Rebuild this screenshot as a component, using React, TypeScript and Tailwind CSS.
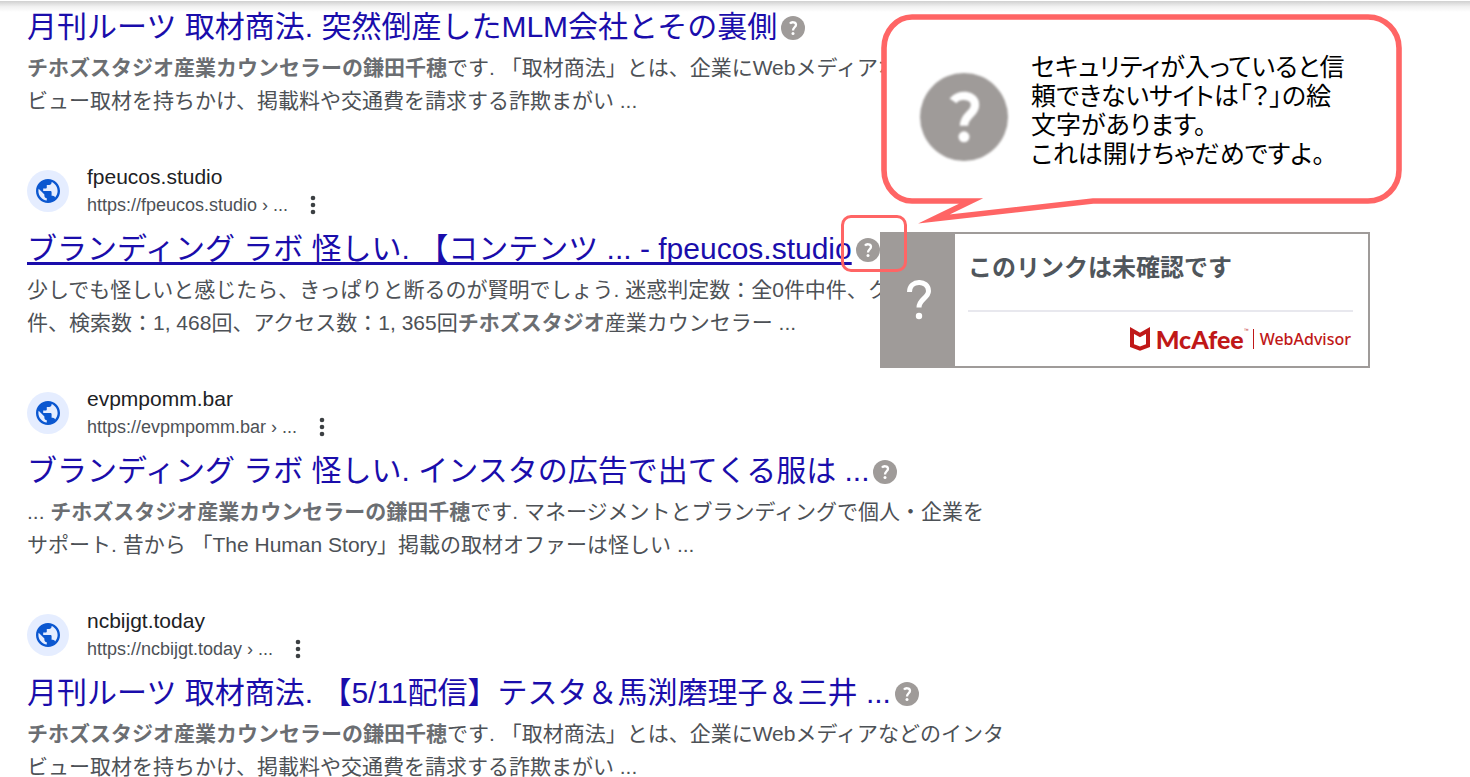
import type { ReactNode } from "react";

type Result = {
  site?: string;
  url?: string;
  title: string;
  underlined?: boolean;
  lines: ReactNode[];
};

const results: Result[] = [
  {
    title: "月刊ルーツ 取材商法. 突然倒産したMLM会社とその裏側",
    lines: [
      <><b>チホズスタジオ産業カウンセラーの鎌田千穂</b>です. 「取材商法」とは、企業にWebメディアなどのインタ</>,
      <>ビュー取材を持ちかけ、掲載料や交通費を請求する詐欺まがい ...</>,
    ],
  },
  {
    site: "fpeucos.studio",
    url: "https://fpeucos.studio",
    title: "ブランディング ラボ 怪しい. 【コンテンツ ... - fpeucos.studio",
    underlined: true,
    lines: [
      <>少しでも怪しいと感じたら、きっぱりと断るのが賢明でしょう. 迷惑判定数：全0件中件、ク</>,
      <>件、検索数：1, 468回、アクセス数：1, 365回<b>チホズスタジオ</b>産業カウンセラー ...</>,
    ],
  },
  {
    site: "evpmpomm.bar",
    url: "https://evpmpomm.bar",
    title: "ブランディング ラボ 怪しい. インスタの広告で出てくる服は ...",
    lines: [
      <>... <b>チホズスタジオ産業カウンセラーの鎌田千穂</b>です. マネージメントとブランディングで個人・企業を</>,
      <>サポート. 昔から 「The Human Story」掲載の取材オファーは怪しい ...</>,
    ],
  },
  {
    site: "ncbijgt.today",
    url: "https://ncbijgt.today",
    title: "月刊ルーツ 取材商法. 【5/11配信】テスタ＆馬渕磨理子＆三井 ...",
    lines: [
      <><b>チホズスタジオ産業カウンセラーの鎌田千穂</b>です. 「取材商法」とは、企業にWebメディアなどのインタ</>,
      <>ビュー取材を持ちかけ、掲載料や交通費を請求する詐欺まがい ...</>,
    ],
  },
];

function Question({ className }: { className: string }) {
  return (
    <svg viewBox="0 0 24 24" className={className} aria-hidden="true">
      <circle cx="12" cy="12" r="12" fill="#9f9b99" />
      <path d="M9 7.6C10.4 5.6 15 5.7 15 8.7C15 11.2 12 11.4 12 14.4" fill="none" stroke="#fff" strokeWidth="2.3" />
      <circle cx="12" cy="17.4" r="1.5" fill="#fff" />
    </svg>
  );
}

function Globe() {
  return (
    <span className="flex size-[42px] shrink-0 items-center justify-center rounded-full bg-[#e5edff]">
      <svg viewBox="2 2 20 20" className="size-6" fill="#0b57d0" aria-hidden="true">
        <path d="M12 2C6.48 2 2 6.48 2 12s4.48 10 10 10 10-4.48 10-10S17.52 2 12 2zM4 12c0-.61.08-1.21.21-1.78L8.99 15v1c0 1.1.9 2 2 2v1.93C7.06 19.43 4 16.07 4 12zm13.89 5.4c-.26-.81-1-1.4-1.9-1.4h-1v-3c0-.55-.45-1-1-1h-6v-2h2c.55 0 1-.45 1-1V7h2c1.1 0 2-.9 2-2v-.41C17.92 5.77 20 8.65 20 12c0 2.08-.81 3.98-2.11 5.4z" />
      </svg>
    </span>
  );
}

function ResultItem({ r }: { r: Result }) {
  return (
    <article className="whitespace-nowrap">
      {r.site && (
        <div className="mb-[10px] flex h-14 items-center gap-[18px]">
          <Globe />
          <div>
            <div className="text-[21px] leading-7 text-[#202124]">{r.site}</div>
            <div className="flex items-center text-[18px] leading-7 text-[#4d5156]">
              <span>{r.url} › ...</span>
              <button aria-label="詳細" className="ml-[15px] flex h-7 w-5 items-center justify-center">
                <svg viewBox="0 0 6 20" className="h-5 w-[6px]" fill="#3c4043" aria-hidden="true">
                  <circle cx="3" cy="3" r="2.3" />
                  <circle cx="3" cy="10" r="2.3" />
                  <circle cx="3" cy="17" r="2.3" />
                </svg>
              </button>
            </div>
          </div>
        </div>
      )}
      <h3 className="flex items-center gap-1 text-[30px] leading-10 text-[#1a0dab]">
        <a href="#" className={r.underlined ? "underline decoration-[3px] underline-offset-3 [text-decoration-skip-ink:none]" : ""}>{r.title}</a>
        <Question className="mt-[2px] size-6" />
      </h3>
      <p className="mt-1 text-[21px] leading-[33px] text-[#4d5156] [&_b]:text-[#6b6e72]">
        {r.lines.map((line, i) => (
          <span key={i} className="block">{line}</span>
        ))}
      </p>
    </article>
  );
}

function Callout() {
  return (
    <div className="absolute left-[881px] top-[13px]">
      <svg viewBox="0 0 521 214" className="h-[214px] w-[521px]" aria-hidden="true">
        <path
          d="M31 4H487A31 31 0 0 1 518 35V157A31 31 0 0 1 487 188H212L53 206L90 188H31A28 31 0 0 1 3 157V35A28 31 0 0 1 31 4Z"
          fill="#fff"
          stroke="#ff6565"
          strokeWidth="5.6"
          strokeMiterlimit="10"
        />
      </svg>
      <div className="absolute inset-x-0 top-[2px] flex h-[192px] items-center gap-[23px] pl-[39px]">
        <Question className="mt-3 size-[88px] blur-[1px]" />
        <p className="whitespace-nowrap text-[25px] leading-[29px] text-black [font-feature-settings:'palt']">
          セキュリティが入っていると信<br />
          頼できないサイトは「？」の絵<br />
          文字があります。<br />
          これは開けちゃだめですよ。
        </p>
      </div>
    </div>
  );
}

function Advisor() {
  return (
    <aside className="absolute left-[880px] top-[232px] flex h-[136px] w-[490px] border-2 border-[#9f9b99] bg-white">
      <div className="flex w-[73px] shrink-0 items-center justify-center bg-[#9f9b99]">
        <svg viewBox="0 0 24 40" className="h-10 w-6" aria-hidden="true">
          <path d="M2.5 12C2.5 -0.5 21.5 -0.5 21.5 11C21.5 18 12 19 12 27.5" fill="none" stroke="#fff" strokeWidth="5" />
          <circle cx="12" cy="36" r="3.2" fill="#fff" />
        </svg>
      </div>
      <div className="flex flex-1 flex-col pl-[13px] pr-[15px]">
        <p className="border-b-2 border-[#e8e8ee] pb-6 pt-4 text-[24px] leading-9 font-bold text-[#50565c]">このリンクは未確認です</p>
        <div className="flex h-[53px] items-center justify-end pr-[2px] text-[#c01818]">
          <svg viewBox="0 0 20 24" className="mr-[6px] h-6 w-5" fill="none" stroke="currentColor" strokeWidth="4" aria-hidden="true">
            <path d="M2 3.5V18.5L10 21.5L18 18.5V3.5L10 8Z" />
          </svg>
          <span className="font-['Lato','Liberation_Sans',sans-serif] text-[25px] leading-8 font-black">McAfee</span>
          <span className="self-start pt-3 text-[5px] leading-3">™</span>
          <span className="ml-1 mr-[6px] h-5 w-px bg-current" />
          <span className="font-['Noto_Sans',sans-serif] text-[16px] leading-6 font-medium">WebAdvisor</span>
        </div>
      </div>
    </aside>
  );
}

export default function App() {
  return (
    <main className="relative h-screen overflow-hidden bg-white font-['Liberation_Sans','Noto_Sans_CJK_JP',sans-serif]" lang="ja">
      <div className="h-3 border-t border-white bg-linear-to-b from-[#d0d0d0] via-[#f0f0f0] to-white" />
      <div className="-mt-[5px] flex flex-col gap-[46px] pl-[27px]">
        {results.map((r, i) => (
          <ResultItem key={i} r={r} />
        ))}
      </div>
      <Callout />
      <Advisor />
      <div className="absolute left-[841px] top-[215px] h-[57px] w-[66px] rounded-[10px] border-[3px] border-[#ff6565]" />
    </main>
  );
}
